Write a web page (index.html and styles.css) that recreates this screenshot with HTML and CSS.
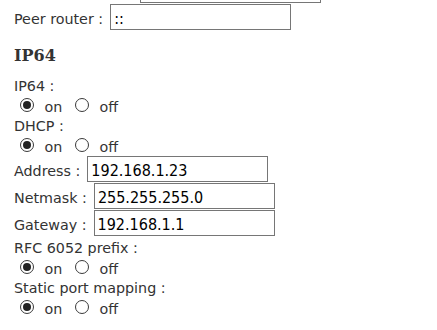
FILE: index.html
```html
<!DOCTYPE html>
<html lang="en">
<head>
  <meta charset="UTF-8" />
  <meta name="viewport" content="width=device-width, initial-scale=1.0" />
  <title>Router settings - IP64</title>
  <link rel="stylesheet" href="styles.css">
</head>
<body>
  <form class="settings">
    <div class="row row-cut">
      <span class="spacer"></span><input type="text" class="field" value="">
    </div>
    <div class="row">
      <span>Peer router :</span><input type="text" class="field" value="::">
    </div>

    <h3>IP64</h3>

    <div class="label">IP64 :</div>
    <div class="choice">
      <input type="radio" name="ip64" checked> on <input type="radio" name="ip64"> off
    </div>

    <div class="label">DHCP :</div>
    <div class="choice">
      <input type="radio" name="dhcp" checked> on <input type="radio" name="dhcp"> off
    </div>

    <div class="row">
      <span>Address :</span><input type="text" class="field" value="192.168.1.23">
    </div>
    <div class="row">
      <span>Netmask :</span><input type="text" class="field" value="255.255.255.0">
    </div>
    <div class="row">
      <span>Gateway :</span><input type="text" class="field" value="192.168.1.1">
    </div>

    <div class="label">RFC 6052 prefix :</div>
    <div class="choice">
      <input type="radio" name="rfc" checked> on <input type="radio" name="rfc"> off
    </div>

    <div class="label">Static port mapping :</div>
    <div class="choice">
      <input type="radio" name="static" checked> on <input type="radio" name="static"> off
    </div>
  </form>
</body>
</html>
```

FILE: styles.css
```css
body {
  font-family: "DejaVu Sans", Verdana, sans-serif;
  font-size: 14.3px;
  color: #333;
  background-color: white;
  margin: 0;
  padding: 0;
}
.settings {
  padding: 0 14px;
  margin-top: -23px;
}
.row {
  display: flex;
  align-items: baseline;
  height: 27px;
  white-space: nowrap;
}
.row-cut {
  align-items: flex-start;
}
.row span {
  margin-right: 7px;
}
.row .spacer {
  width: 119px;
}
.field {
  box-sizing: border-box;
  width: 181px;
  height: 26px;
  padding: 2px 3px 0;
  border: 1px solid #767676;
  font-family: "DejaVu Sans Condensed", "DejaVu Sans", sans-serif;
  font-stretch: condensed;
  font-size: 16px;
  color: black;
  margin: 0;
}
h3 {
  font-family: "DejaVu Serif", Georgia, serif;
  font-size: 16px;
  line-height: 20px;
  font-weight: bold;
  margin: 15px 0 10px;
}
.label {
  line-height: 20px;
  white-space: nowrap;
}
.row + .label {
  margin-top: 1px;
}
.choice {
  line-height: 18px;
  padding: 2px 0 0 6px;
  white-space: nowrap;
}
.choice input[type="radio"] {
  appearance: none;
  box-sizing: border-box;
  width: 14px;
  height: 14px;
  border: 1px solid #3a3a3a;
  border-radius: 50%;
  margin: 0 6px 0 0;
  vertical-align: baseline;
  position: relative;
}
.choice input[type="radio"] + input[type="radio"] {
  margin-left: 8px;
}
.choice input[type="radio"]:checked::after {
  content: "";
  position: absolute;
  left: 2px;
  top: 2px;
  width: 8px;
  height: 8px;
  border-radius: 50%;
  background-color: #222;
}
```
